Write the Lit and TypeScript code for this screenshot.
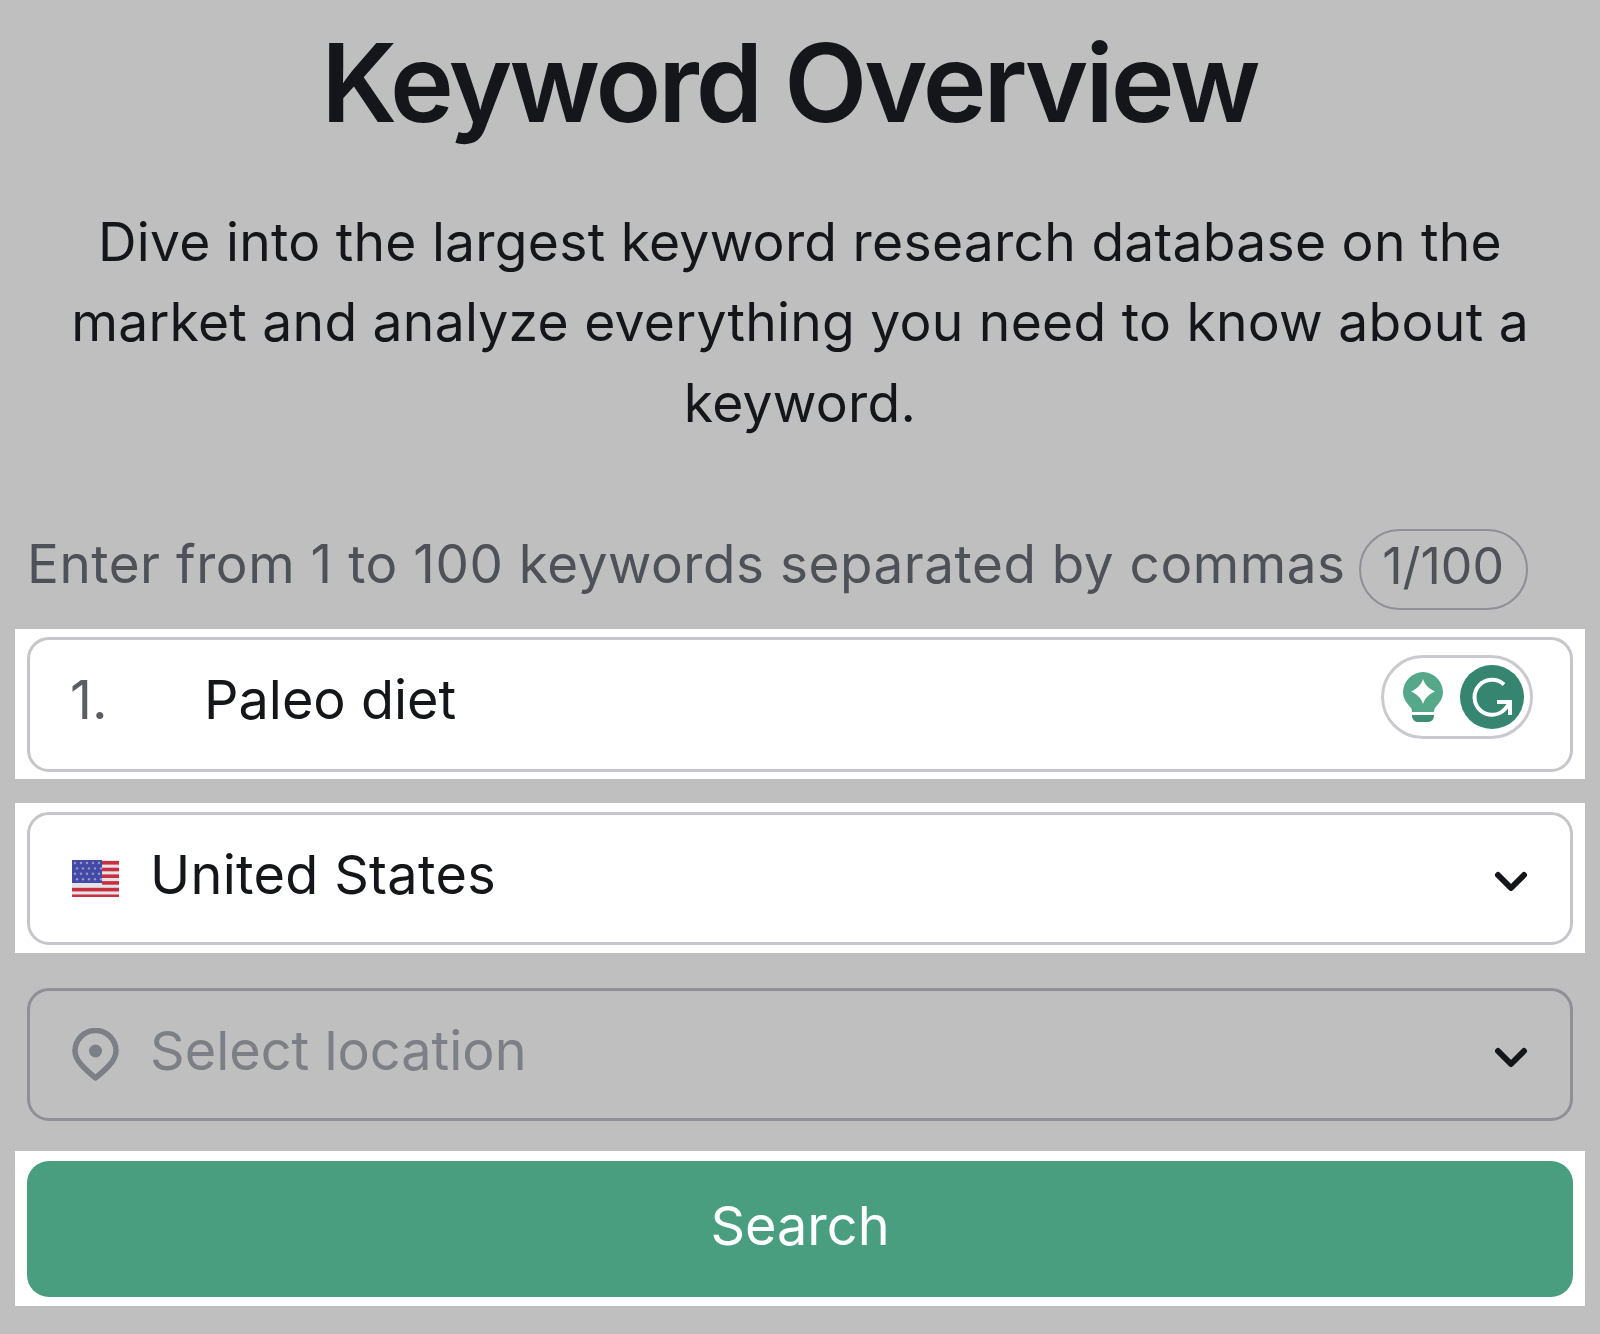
import { LitElement, html, css, svg } from "lit";
import { customElement } from "lit/decorators.js";

const chevron = html`<svg class="chev" width="34" height="24" viewBox="0 0 34 24"><path d="M4 5 L17 18 L30 5" fill="none" stroke="#14161a" stroke-width="6" stroke-linecap="round" stroke-linejoin="round"/></svg>`;

const stripes = [0, 1, 2, 3, 4, 5].map(
  (i) => svg`<rect x="${i < 4 ? 30 : 0}" y="${1 + i * 6.7}" width="${i < 4 ? 17 : 47}" height="3.6" fill="#c9303f"/>`
);
const stars: unknown[] = [];
for (let r = 0; r < 4; r++) {
  for (let c = 0; c < 5; c++) {
    stars.push(svg`<circle cx="${3 + c * 6 + (r % 2 ? 2 : 0)}" cy="${3 + r * 5.4}" r="1.2" fill="#9a9bb8"/>`);
  }
}

@customElement("app-root")
export class AppRoot extends LitElement {
  static styles = css`
    :host {
      display: block;
      width: 1600px;
      height: 1334px;
      background: #bfbfbf;
      font-family: Inter, "Liberation Sans", sans-serif;
      color: #14161a;
      overflow: hidden;
    }
    .page {
      display: flex;
      flex-direction: column;
      padding: 0 15px;
    }
    h1 {
      margin: 0;
      padding: 27px 21px 0 0;
      height: 136px;
      box-sizing: border-box;
      font-size: 108px;
      line-height: 112px;
      font-weight: 600;
      letter-spacing: -3px;
      text-align: center;
    }
    .lead {
      margin: 65.5px 0 0;
      font-size: 53.4px;
      line-height: 80.5px;
      text-align: center;
      padding: 0 40px;
      letter-spacing: 0.26px;
    }
    .label-row {
      display: flex;
      align-items: center;
      margin-top: 86px;
      padding-left: 12px;
      height: 81px;
      font-size: 53px;
      letter-spacing: 0.55px;
      color: #4f5159;
    }
    .label-row > span:first-child {
      margin-bottom: 12px;
    }
    .count {
      margin-left: 13px;
      box-sizing: border-box;
      width: 169px;
      height: 81px;
      padding-bottom: 8px;
      border: 2px solid #8f9096;
      border-radius: 41px;
      display: flex;
      align-items: center;
      justify-content: center;
      font-size: 50px;
      letter-spacing: 0;
    }
    .panel {
      background: #fff;
    }
    .p1 {
      margin-top: 19px;
      padding: 8px 12px 7px;
    }
    .p2 {
      margin-top: 24px;
      padding: 9px 12px 8px;
    }
    .p3 {
      margin-top: 35px;
      padding: 0 12px;
    }
    .p4 {
      margin-top: 30px;
      padding: 10px 12px 9px;
    }
    .field {
      box-sizing: border-box;
      height: 135px;
      border: 3px solid #c5c6cb;
      border-radius: 22px;
      display: flex;
      align-items: center;
      padding: 0 30px 0 42px;
      font-size: 54px;
    }
    .p2 .field,
    .p3 .field {
      height: 133px;
    }
    .p3 .field {
      border-color: #8f9096;
      color: #7d7f86;
    }
    .num {
      width: 134px;
      margin-left: -2px;
      color: #5b5d65;
      margin-bottom: 11px;
    }
    .val {
      flex: 1;
      margin-bottom: 8px;
    }
    .p1 .val {
      margin-bottom: 11px;
    }
    .p2 .val {
      letter-spacing: 0.3px;
    }
    .ico {
      width: 47px;
      margin-right: 31px;
      display: flex;
    }
    .chev {
      margin: 6px 12.5px 0 0;
    }
    .gram {
      box-sizing: border-box;
      width: 152px;
      height: 84px;
      border: 3px solid #c9cad0;
      border-radius: 42px;
      display: flex;
      align-items: center;
      margin-right: 7px;
      margin-bottom: 16px;
      padding-left: 18px;
      gap: 16px;
    }
    button {
      display: block;
      width: 100%;
      height: 136px;
      border: 0;
      border-radius: 22px;
      background: #4a9e80;
      color: #fff;
      font: inherit;
      font-size: 54px;
      font-weight: 400;
      padding: 0 0 8px;
    }
  `;

  render() {
    return html`
      <div class="page">
        <h1>Keyword Overview</h1>
        <p class="lead">Dive into the largest keyword research database on the market and analyze everything you need to know about a keyword.</p>
        <div class="label-row">
          <span>Enter from 1 to 100 keywords separated by commas</span>
          <span class="count">1/100</span>
        </div>
        <div class="panel p1">
          <div class="field">
            <span class="num">1.</span>
            <span class="val">Paleo diet</span>
            <div class="gram">
              <svg width="42" height="52" viewBox="0 0 42 52">
                <path d="M21 1 A20.5 20.5 0 0 1 41 21 C41 29 36 33 33 37 C32 39 32 40 32 41 L10 41 C10 40 10 39 9 37 C6 33 1 29 1 21 A20.5 20.5 0 0 1 21 1 Z" fill="#55a88a"/>
                <path d="M21 8 C23 14 27 18 33 20.5 C27 23 23 27 21 33 C19 27 15 23 9 20.5 C15 18 19 14 21 8 Z" fill="#fff"/>
                <path d="M10 44 H32 C32 49 29 51 26 51 H16 C13 51 10 49 10 44 Z" fill="#3f8f74"/>
              </svg>
              <svg width="64" height="64" viewBox="0 0 64 64">
                <circle cx="32" cy="32" r="32" fill="#358570"/>
                <path d="M44 19.5 A17.5 17.5 0 1 0 45 44 L50 38" fill="none" stroke="#fff" stroke-width="4"/>
                <path d="M37 37 H50 V50" fill="none" stroke="#fff" stroke-width="4"/>
              </svg>
            </div>
          </div>
        </div>
        <div class="panel p2">
          <div class="field">
            <span class="ico">
              <svg width="47" height="37" viewBox="0 0 47 37">
                <rect width="47" height="37" fill="#e4e4e8"/>
                ${stripes}
                <rect width="30" height="23" fill="#4249a8"/>
                ${stars}
              </svg>
            </span>
            <span class="val">United States</span>
            ${chevron}
          </div>
        </div>
        <div class="p3">
          <div class="field">
            <span class="ico">
              <svg width="47" height="54" viewBox="0 0 47 54">
                <path d="M23.5 50 C14 42 3 33 3 23 A20.5 20.5 0 0 1 44 23 C44 33 33 42 23.5 50 Z" fill="none" stroke="#7d7f86" stroke-width="5.5" stroke-linejoin="round"/>
                <circle cx="23.5" cy="23" r="6.5" fill="#7d7f86"/>
              </svg>
            </span>
            <span class="val">Select location</span>
            ${chevron}
          </div>
        </div>
        <div class="panel p4">
          <button>Search</button>
        </div>
      </div>
    `;
  }
}
